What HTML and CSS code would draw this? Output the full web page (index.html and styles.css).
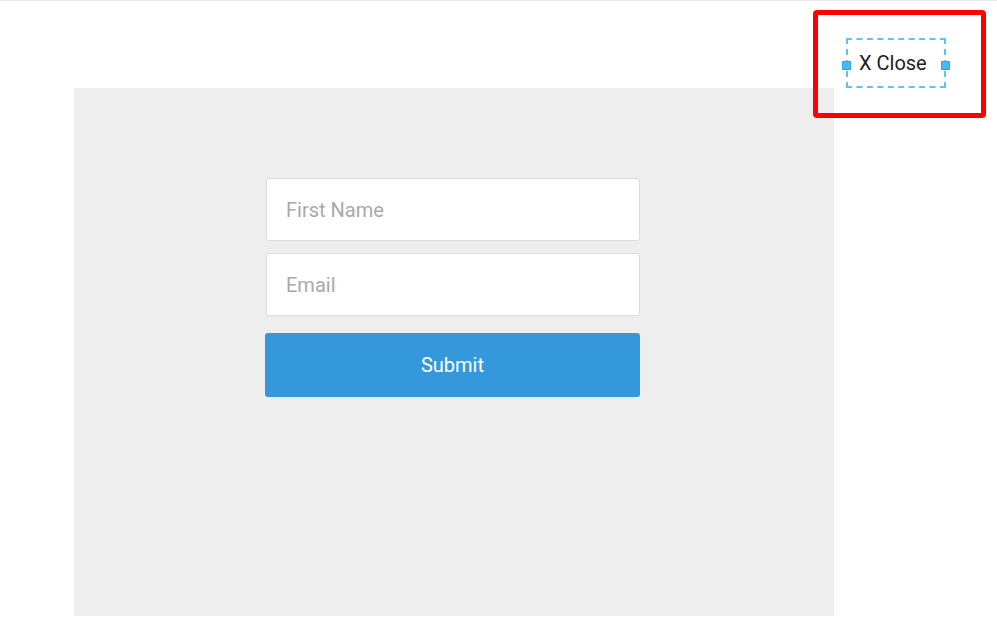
FILE: index.html
```html
<!DOCTYPE html>
<html lang="en">
<head>
    <meta charset="UTF-8">
    <meta name="viewport" content="width=device-width, initial-scale=1.0">
    <title>Signup Popup</title>
    <link rel="stylesheet" href="styles.css">
</head>
<body>
    <div class="page">
        <div class="close-frame">
            <div class="close-box">
                <span class="handle left"></span>
                <span class="close-text">X Close</span>
                <span class="handle right"></span>
            </div>
        </div>
        <div class="panel">
            <form class="signup-form">
                <input type="text" class="field" placeholder="First Name">
                <input type="email" class="field" placeholder="Email">
                <button type="button" class="submit">Submit</button>
            </form>
        </div>
    </div>
</body>
</html>
```

FILE: styles.css
```css
body {
    font-family: Roboto, "Liberation Sans", sans-serif;
    background-color: #fff;
    margin: 0;
    padding: 0;
}
.page {
    position: relative;
    height: 643px;
    border-top: 1px solid #e6e6e6;
    box-sizing: border-box;
    padding-top: 87px;
}
.panel {
    width: 760px;
    height: 528px;
    margin-left: 74px;
    background-color: #eeeeee;
    padding-top: 90px;
    box-sizing: border-box;
}
.signup-form {
    width: 374px;
    margin-left: 192px;
    display: flex;
    flex-direction: column;
}
.field {
    height: 63px;
    box-sizing: border-box;
    border: 1px solid #dcdcdc;
    border-radius: 3px;
    background-color: #fff;
    padding: 0 19px;
    font-family: inherit;
    font-size: 20px;
    color: #333;
    margin-bottom: 12px;
    outline: none;
}
.field::placeholder {
    color: #a9a9a9;
}
.submit {
    width: 375px;
    height: 64px;
    margin-top: 5px;
    margin-left: -1px;
    border: none;
    border-radius: 3px;
    background-color: #3598db;
    color: #fff;
    font-family: inherit;
    font-size: 20px;
    cursor: pointer;
}
.close-frame {
    position: absolute;
    top: 9px;
    left: 813px;
    width: 173px;
    height: 108px;
    box-sizing: border-box;
    border: 5px solid #ff0000;
    border-radius: 4px;
    display: flex;
    padding: 23px 0 0 28px;
}
.close-box {
    position: relative;
    width: 100px;
    height: 50px;
    box-sizing: border-box;
    border: 2px dashed #5bc3f7;
    display: flex;
    align-items: center;
    padding-left: 11px;
}
.close-text {
    font-size: 20px;
    color: #222;
}
.handle {
    position: absolute;
    top: 21px;
    width: 9px;
    height: 9px;
    background-color: #4ab8f5;
    border: 1px solid #36a6e3;
    box-sizing: border-box;
}
.handle.left {
    left: -6px;
}
.handle.right {
    right: -6px;
}
```
